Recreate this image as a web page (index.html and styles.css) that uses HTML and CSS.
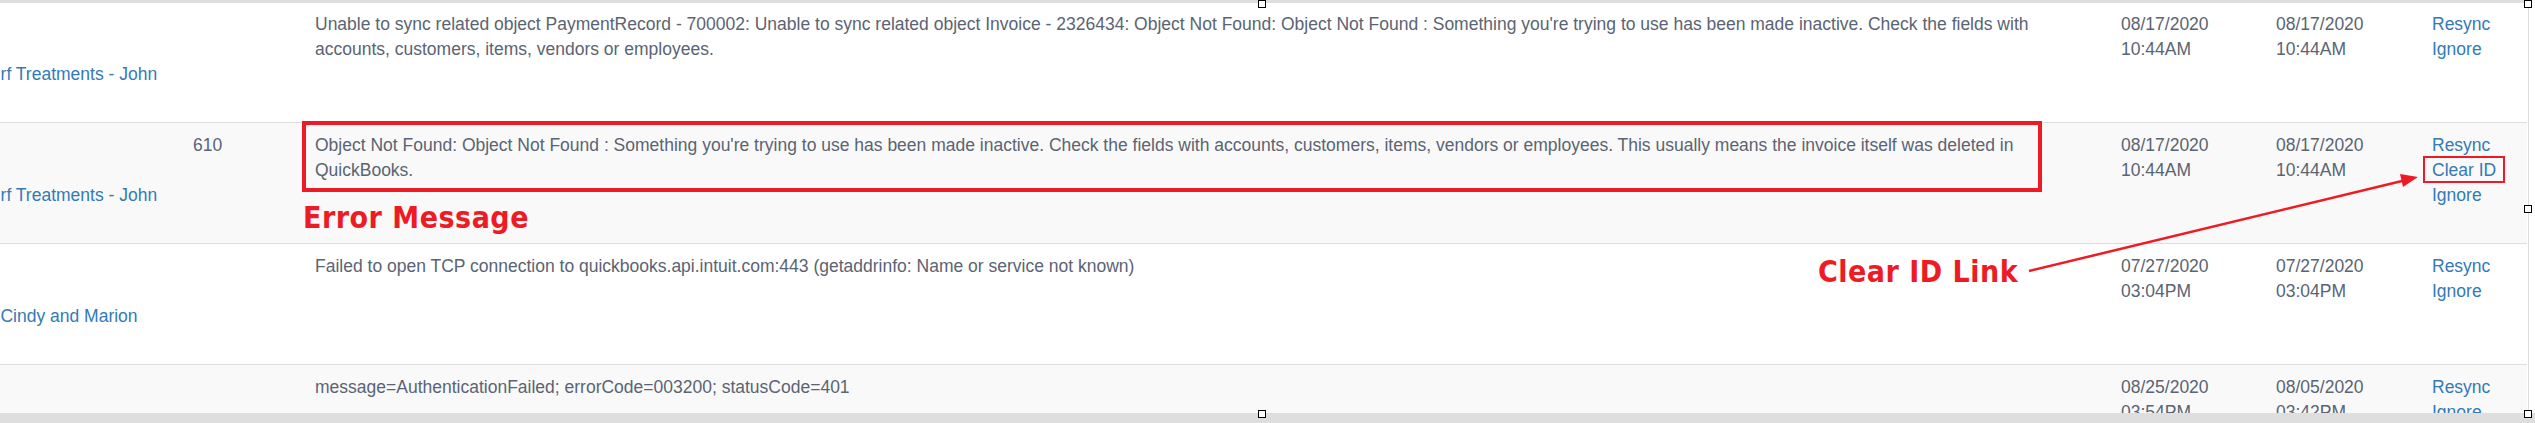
FILE: index.html
```html
<!DOCTYPE html>
<html lang="en">
<head>
    <meta charset="UTF-8">
    <meta name="viewport" content="width=device-width, initial-scale=1.0">
    <title>Sync errors</title>
    <link rel="stylesheet" href="styles.css">
</head>
<body>
    <div class="frame">
        <div class="head-rule"></div>

        <div class="viewport">
            <table class="sync-log">
                <colgroup>
                    <col class="c-cust">
                    <col class="c-num">
                    <col class="c-msg">
                    <col class="c-date">
                    <col class="c-date2">
                    <col class="c-act">
                </colgroup>
                <tr>
                    <td class="cust"><a href="#">Turf Treatments - John</a></td>
                    <td></td>
                    <td>Unable to sync related object PaymentRecord - 700002: Unable to sync related object Invoice - 2326434: Object Not Found: Object Not Found : Something you're trying to use has been made inactive. Check the fields with accounts, customers, items, vendors or employees.</td>
                    <td>08/17/2020 10:44AM</td>
                    <td>08/17/2020 10:44AM</td>
                    <td class="actions"><a href="#">Resync</a><a href="#">Ignore</a></td>
                </tr>
                <tr>
                    <td class="cust"><a href="#">Turf Treatments - John</a></td>
                    <td>610</td>
                    <td>
                        <div class="flagged">Object Not Found: Object Not Found : Something you're trying to use has been made inactive. Check the fields with accounts, customers, items, vendors or employees. This usually means the invoice itself was deleted in QuickBooks.<span class="note note-msg">Error Message</span></div>
                    </td>
                    <td>08/17/2020 10:44AM</td>
                    <td>08/17/2020 10:44AM</td>
                    <td class="actions"><a href="#">Resync</a><a href="#" class="clear-id">Clear ID</a><a href="#">Ignore</a></td>
                </tr>
                <tr>
                    <td class="cust"><a href="#">Cindy and Marion</a></td>
                    <td></td>
                    <td>Failed to open TCP connection to quickbooks.api.intuit.com:443 (getaddrinfo: Name or service not known)</td>
                    <td>07/27/2020 03:04PM</td>
                    <td>07/27/2020 03:04PM</td>
                    <td class="actions"><a href="#">Resync</a><a href="#">Ignore</a></td>
                </tr>
                <tr>
                    <td class="cust"></td>
                    <td></td>
                    <td>message=AuthenticationFailed; errorCode=003200; statusCode=401</td>
                    <td>08/25/2020 03:54PM</td>
                    <td>08/05/2020 03:42PM</td>
                    <td class="actions"><a href="#">Resync</a><a href="#">Ignore</a></td>
                </tr>
            </table>
        </div>

        <div class="hscroll"></div>

        <!-- annotations -->
        <span class="note note-link">Clear ID Link</span>
        <svg class="arrow" width="2535" height="423" viewBox="0 0 2535 423">
            <line x1="2029" y1="271" x2="2402" y2="181" stroke="#ed1c24" stroke-width="2.5"/>
            <polygon points="2418,177 2403,187 2400,174" fill="#ed1c24"/>
        </svg>

        <span class="handle h-tc"></span>
        <span class="handle h-tr"></span>
        <span class="handle h-mr"></span>
        <span class="handle h-bc"></span>
        <span class="handle h-br"></span>
    </div>
</body>
</html>
```
FILE: styles.css
```css
*{margin: 0; padding: 0;}
html,body {background: #fff; overflow: hidden;}
body {font-family: "Liberation Sans", Arial, sans-serif; font-size: 17.5px; line-height: 25px; color: #5a6473;}
a {color: #337ab7; text-decoration: none;}

.frame {position: relative; width: 2535px; height: 423px; display: flex; flex-direction: column;}
.head-rule {flex: none; width: 2527px; height: 3px; background: #ddd;}
.viewport {flex: 1; width: 2528px; border-right: 1px solid #ddd; overflow: hidden;}
.hscroll {flex: none; height: 10px; background: #dedede;}

.sync-log {border-collapse: separate; border-spacing: 0; table-layout: fixed; width: 2572px; margin-left: -45px;}
.c-cust {width: 228px;}
.c-num {width: 122px;}
.c-msg {width: 1806px;}
.c-date {width: 155px;}
.c-date2 {width: 156px;}
.c-act {width: 105px;}
.sync-log td {padding: 10px; height: 100px; border-top: 1px solid #ddd; vertical-align: top; text-align: left;}
.sync-log tr:first-child td {border-top: 0; padding-top: 9px;}
.sync-log tr:nth-child(even) td {background: #f9f9f9;}
.sync-log td.cust {text-align: center;}
.cust a {display: block; margin-top: 50px;}
.actions a {display: block; width: fit-content;}

.flagged {position: relative; display: block;}
.flagged::after {content: ""; position: absolute; top: -12px; bottom: -9px; left: -13px; right: 59px; border: 4px solid #ed1c24;}
.clear-id {position: relative;}
.clear-id::after {content: ""; position: absolute; top: -2px; bottom: 0; left: -9px; right: -9px; border: 2px solid #ed1c24;}

.note {position: absolute; font-family: "DejaVu Sans Condensed", "DejaVu Sans", sans-serif; font-weight: bold; font-size: 30px; line-height: 30px; letter-spacing: 0.5px; color: #ed1c24; white-space: nowrap;}
.note-msg {top: calc(100% + 20px); left: -12px;}
.note-link {top: 257px; left: 1818px;}
.arrow {position: absolute; left: 0; top: 0; pointer-events: none;}

.handle {position: absolute; width: 6px; height: 6px; border: 1px solid #000; background: #fff;}
.h-tc {left: 1258px; top: 0;}
.h-tr {left: 2524px; top: 0;}
.h-mr {left: 2524px; top: 205px;}
.h-bc {left: 1258px; top: 410px;}
.h-br {left: 2524px; top: 410px;}
```
